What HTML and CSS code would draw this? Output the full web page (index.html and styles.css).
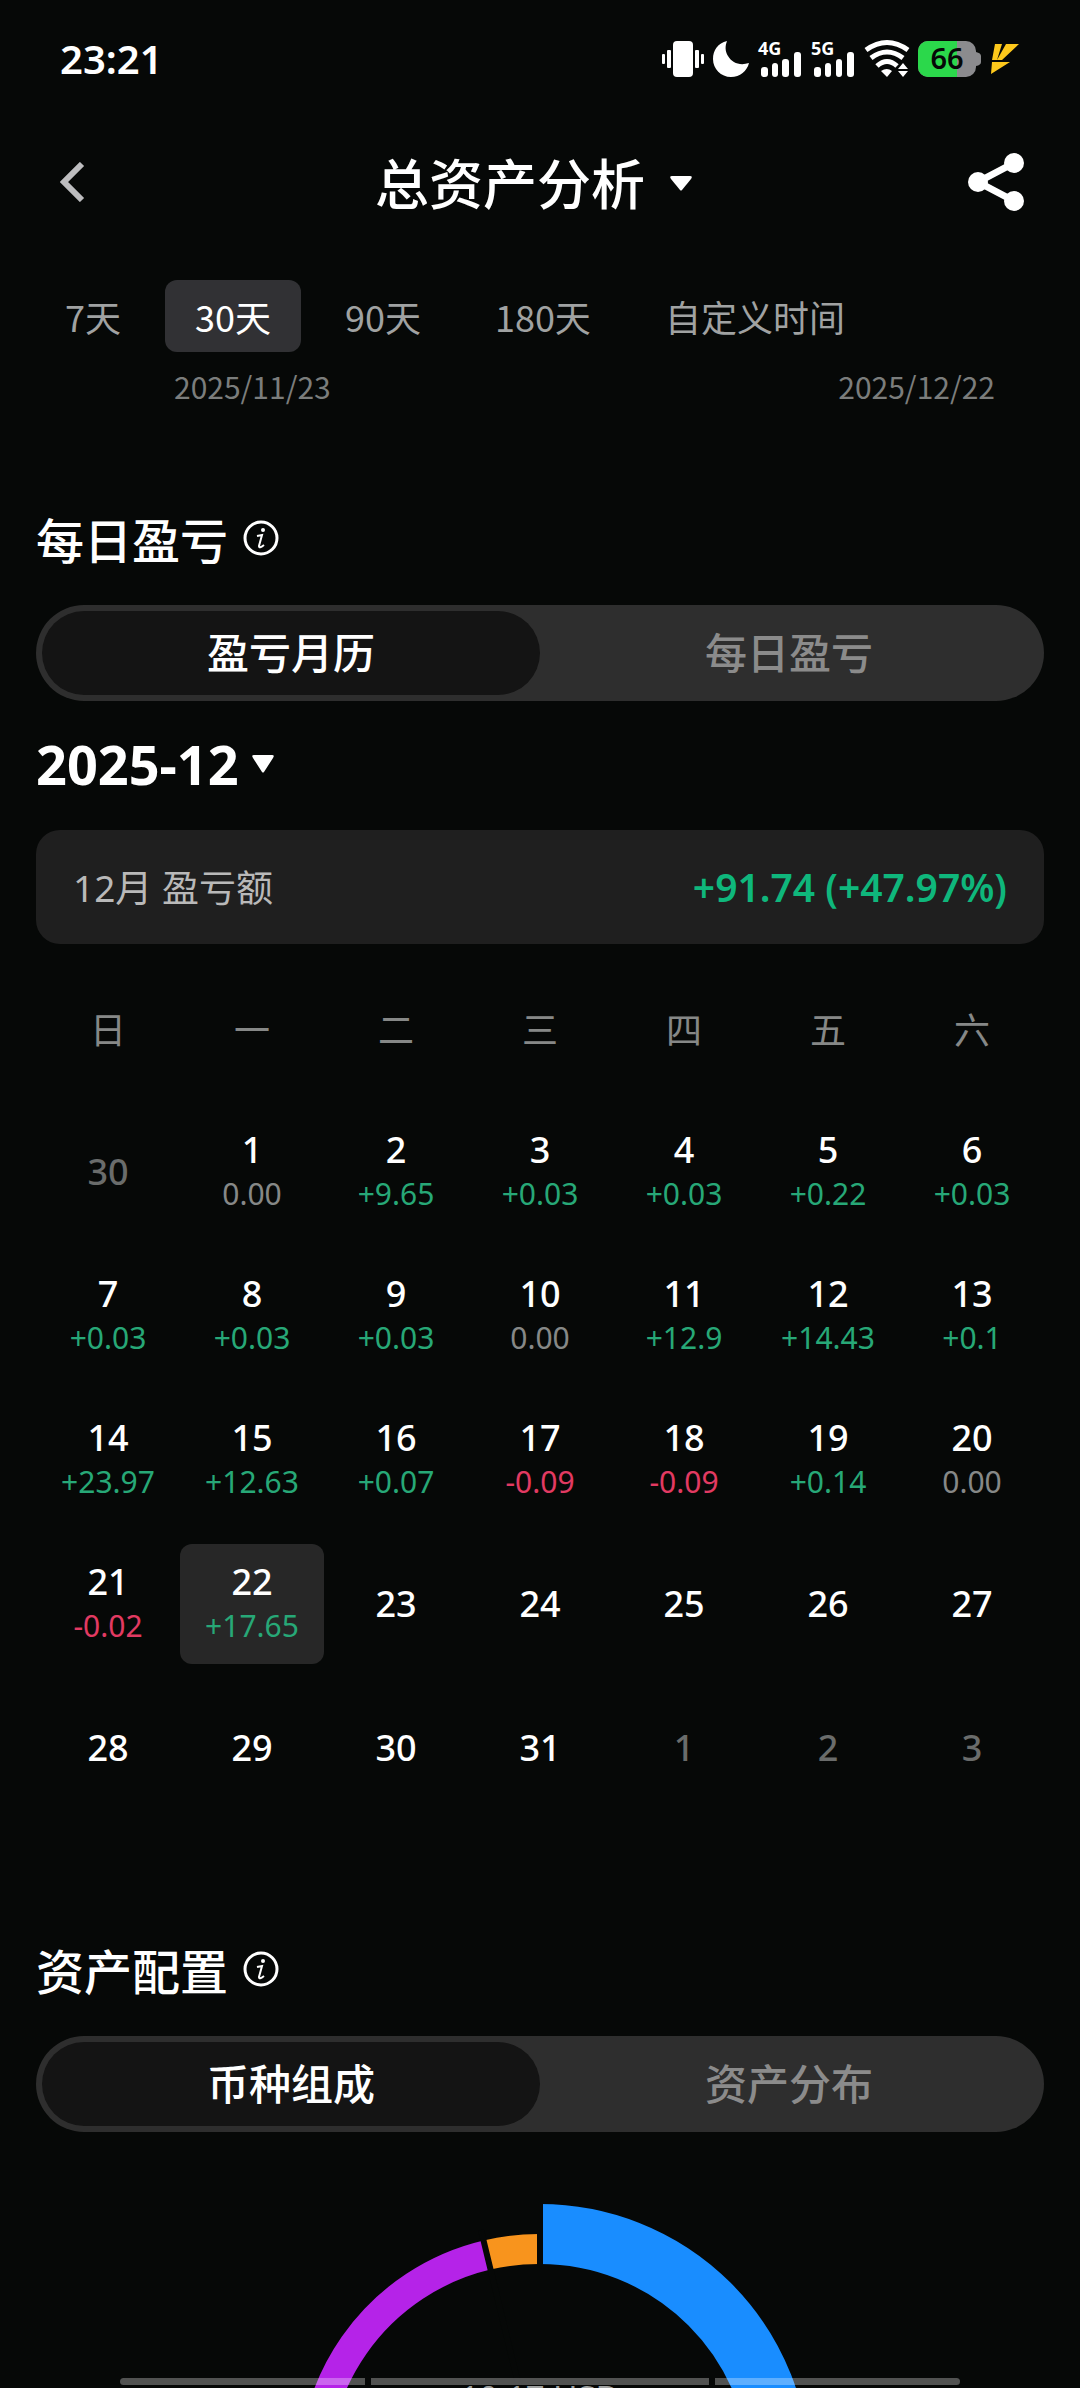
FILE: index.html
```html
<!DOCTYPE html>
<html lang="zh-CN">
<head>
<meta charset="utf-8">
<meta name="viewport" content="width=device-width, initial-scale=1">
<title>总资产分析</title>
<link rel="stylesheet" href="styles.css">
</head>
<body>
<div class="status-bar">
  <span class="clock">23:21</span>
  <svg class="status-icons" viewBox="0 0 360 40" width="360" height="40" aria-hidden="true">
    <g fill="#fff">
      <rect x="13" y="3" width="20" height="36" rx="4"/>
      <rect x="2" y="16" width="3" height="10" rx="1"/><rect x="7" y="12" width="4" height="18" rx="1"/>
      <rect x="35" y="12" width="4" height="18" rx="1"/><rect x="41" y="16" width="3" height="10" rx="1"/>
      <path d="M67 3C58 5 53 12 53 21C53 31 61 39 71 39C80 39 87 33 89 25C80 28 72 25 68 18C65 13 65 8 67 3Z"/>
      <rect x="101" y="29" width="7" height="10" rx="3"/><rect x="112" y="25" width="6" height="14" rx="3"/><rect x="122" y="21" width="7" height="18" rx="3"/><rect x="134" y="14" width="7" height="25" rx="3"/>
      <rect x="154" y="29" width="7" height="10" rx="3"/><rect x="165" y="25" width="6" height="14" rx="3"/><rect x="176" y="21" width="6" height="18" rx="3"/><rect x="187" y="14" width="7" height="25" rx="3"/>
      <text class="net-label" x="98" y="17">4G</text>
      <text class="net-label" x="151" y="17">5G</text>
      <path d="M221 33Q227 29 232 33L227 39Z"/>
      <path d="M243 25L248 31H238ZM238 33H248L243 39Z"/>
    </g>
    <g fill="none" stroke="#fff" stroke-width="5">
      <path d="M206 12Q227 -3 248 12"/><path d="M211 20Q227 8 243 20"/><path d="M217 28Q227 19 237 28"/>
    </g>
    <clipPath id="cell"><rect x="258" y="3" width="58" height="36" rx="10"/></clipPath>
    <path d="M316 14q5 1 5 4v6q0 3-5 4z" fill="#8b8b8e"/>
    <g clip-path="url(#cell)"><rect x="258" y="3" width="58" height="36" fill="#8b8b8e"/><rect x="258" y="3" width="39" height="36" fill="#2bd84b"/></g>
    <text class="battery-label" x="287" y="31" text-anchor="middle">66</text>
    <path d="M335 6H342L337 22H332ZM346 6H359L342 22H337ZM332 24H350L331 36Z" fill="#fdc81b"/>
  </svg>
</div>

<header class="top-bar">
  <button class="icon-button" aria-label="返回">
    <svg viewBox="0 0 26 40" width="26" height="40"><path d="M22 2L4 20L22 38" fill="none" stroke="#bdbdbf" stroke-width="6"/></svg>
  </button>
  <h1 class="page-title"><button class="title-button">总资产分析
    <svg class="caret" viewBox="0 0 24 18" width="24" height="18"><path d="M3 1H21Q24 1 22 4L13 15Q12 16 11 15L2 4Q0 1 3 1Z" fill="#fff"/></svg>
  </button></h1>
  <button class="icon-button share" aria-label="分享">
    <svg viewBox="0 0 56 58" width="56" height="58"><path d="M46 10L10 29L46 48" fill="none" stroke="#fff" stroke-width="7"/><g fill="#fff"><circle cx="46" cy="10" r="10"/><circle cx="10" cy="29" r="10"/><circle cx="46" cy="48" r="10"/></g></svg>
  </button>
</header>

<nav class="ranges" aria-label="时间范围">
  <button class="range">7天</button>
  <button class="range active">30天</button>
  <button class="range">90天</button>
  <button class="range">180天</button>
  <button class="range">自定义时间</button>
</nav>
<div class="dates"><time>2025/11/23</time><time>2025/12/22</time></div>

<main class="content">
  <section class="pnl">
    <h2 class="section-title">每日盈亏
      <svg class="info" viewBox="0 0 36 36" width="36" height="36"><circle cx="18" cy="18" r="16" fill="none" stroke="#fff" stroke-width="3"/><circle cx="20" cy="10" r="2" fill="#fff"/><path d="M14 16L19 15L16 26Q16 29 21 25" fill="none" stroke="#fff" stroke-width="2"/></svg>
    </h2>
    <div class="segmented">
      <button class="segment active">盈亏月历</button>
      <button class="segment">每日盈亏</button>
    </div>
    <button class="month">2025-12
      <svg class="caret" viewBox="0 0 24 18" width="24" height="18"><path d="M3 0H21Q24 0 22 3L13 17Q12 18 11 17L2 3Q0 0 3 0Z" fill="#fff"/></svg>
    </button>
    <div class="summary"><span>12月 盈亏额</span><strong>+91.74 (+47.97%)</strong></div>
    <table class="calendar">
      <thead><tr><th>日</th><th>一</th><th>二</th><th>三</th><th>四</th><th>五</th><th>六</th></tr></thead>
      <tbody>
        <tr>
          <td><div class="day other">30</div></td>
          <td><div class="day">1<span>0.00</span></div></td>
          <td><div class="day up">2<span>+9.65</span></div></td>
          <td><div class="day up">3<span>+0.03</span></div></td>
          <td><div class="day up">4<span>+0.03</span></div></td>
          <td><div class="day up">5<span>+0.22</span></div></td>
          <td><div class="day up">6<span>+0.03</span></div></td>
        </tr>
        <tr>
          <td><div class="day up">7<span>+0.03</span></div></td>
          <td><div class="day up">8<span>+0.03</span></div></td>
          <td><div class="day up">9<span>+0.03</span></div></td>
          <td><div class="day">10<span>0.00</span></div></td>
          <td><div class="day up">11<span>+12.9</span></div></td>
          <td><div class="day up">12<span>+14.43</span></div></td>
          <td><div class="day up">13<span>+0.1</span></div></td>
        </tr>
        <tr>
          <td><div class="day up">14<span>+23.97</span></div></td>
          <td><div class="day up">15<span>+12.63</span></div></td>
          <td><div class="day up">16<span>+0.07</span></div></td>
          <td><div class="day down">17<span>-0.09</span></div></td>
          <td><div class="day down">18<span>-0.09</span></div></td>
          <td><div class="day up">19<span>+0.14</span></div></td>
          <td><div class="day">20<span>0.00</span></div></td>
        </tr>
        <tr>
          <td><div class="day down">21<span>-0.02</span></div></td>
          <td><div class="day up selected">22<span>+17.65</span></div></td>
          <td><div class="day">23</div></td>
          <td><div class="day">24</div></td>
          <td><div class="day">25</div></td>
          <td><div class="day">26</div></td>
          <td><div class="day">27</div></td>
        </tr>
        <tr>
          <td><div class="day">28</div></td>
          <td><div class="day">29</div></td>
          <td><div class="day">30</div></td>
          <td><div class="day">31</div></td>
          <td><div class="day other">1</div></td>
          <td><div class="day other">2</div></td>
          <td><div class="day other">3</div></td>
        </tr>
      </tbody>
    </table>
  </section>

  <section class="allocation">
    <h2 class="section-title">资产配置
      <svg class="info" viewBox="0 0 36 36" width="36" height="36"><circle cx="18" cy="18" r="16" fill="none" stroke="#fff" stroke-width="3"/><circle cx="20" cy="10" r="2" fill="#fff"/><path d="M14 16L19 15L16 26Q16 29 21 25" fill="none" stroke="#fff" stroke-width="2"/></svg>
    </h2>
    <div class="segmented">
      <button class="segment active">币种组成</button>
      <button class="segment">资产分布</button>
    </div>
    <div class="chart">
      <svg class="donut" viewBox="-270 -270 540 540" width="540" height="540" aria-hidden="true">
        <path d="M0 -240A240 240 0 0 1 0 240" fill="none" stroke="#198dff" stroke-width="60"/>
        <path d="M0 225A225 225 0 0 1 -53 -219" fill="none" stroke="#b523e8" stroke-width="30"/>
        <path d="M-53 -219A225 225 0 0 1 0 -225" fill="none" stroke="#f8941d" stroke-width="30"/>
        <path d="M0 0V-270M0 0L-59 -244" stroke="#060807" stroke-width="6"/>
      </svg>
      <span class="total">10.17 USD</span>
    </div>
  </section>
</main>
<div class="home-indicator"><i></i><i></i><i></i></div>
</body>
</html>
```

FILE: styles.css
```css
* { box-sizing: border-box; }

body {
  margin: 0;
  height: 100vh;
  display: flex;
  flex-direction: column;
  overflow: hidden;
  background: #060807;
  color: #fff;
  font-family: "Noto Sans", "Noto Sans CJK SC", sans-serif;
  font-size: 36px;
}

button {
  border: 0;
  padding: 0;
  background: none;
  color: inherit;
  font: inherit;
}

h1, h2 { margin: 0; font-weight: 500; }
svg { display: block; flex: none; }

.status-bar {
  display: flex;
  justify-content: space-between;
  align-items: center;
  height: 116px;
  padding: 0 60px;
}
.status-icons { overflow: visible; }
.clock { font-size: 40px; font-weight: 600; }
.net-label { font-size: 18px; font-weight: 700; }
.battery-label { font-size: 29px; font-weight: 600; fill: #060807; }

.top-bar {
  display: grid;
  grid-template-columns: 1fr auto 1fr;
  align-items: center;
  height: 132px;
  padding: 0 56px 0 60px;
}
.icon-button { justify-self: start; }
.share { justify-self: end; }
.page-title { font-size: 54px; line-height: 80px; padding: 3px 16px 0 0; }
.title-button { display: flex; align-items: center; gap: 24px; }

.ranges {
  display: flex;
  gap: 14px;
  margin-top: 32px;
  padding: 0 35px;
  font-family: "Noto Sans CJK SC", sans-serif;
}
.range {
  height: 72px;
  padding: 0 30px;
  border-radius: 12px;
  line-height: 72px;
  color: #a0a2a2;
}
.range.active { background: #313134; color: #fff; }

.dates {
  display: flex;
  justify-content: space-between;
  padding: 12px 85px 0 174px;
  font: 30px/44px "Noto Sans CJK SC", sans-serif;
  color: #7b7d7c;
}

.content {
  flex: 1;
  min-height: 0;
  display: flex;
  flex-direction: column;
  padding: 94px 36px 0;
}

.section-title {
  display: flex;
  align-items: center;
  gap: 15px;
  height: 72px;
  font-size: 48px;
}

.segmented {
  display: grid;
  grid-template-columns: 1fr 1fr;
  margin-top: 31px;
  padding: 6px;
  border-radius: 48px;
  background: #2e2e2e;
}
.segment {
  height: 84px;
  border-radius: 42px;
  font-size: 42px;
  font-weight: 500;
  line-height: 84px;
  color: #8b8b8b;
}
.segment.active { background: #141414; color: #fff; }

.month {
  display: flex;
  align-items: center;
  gap: 12px;
  height: 72px;
  margin: 27px 0 30px;
  font-size: 54px;
  font-weight: 700;
}

.summary {
  display: flex;
  justify-content: space-between;
  align-items: center;
  height: 114px;
  padding: 0 37px 2px;
  border-radius: 24px;
  background: #1f1f1f;
  color: #b9b9b9;
  font-size: 37px;
}
.summary strong { font-size: 39px; font-weight: 600; color: #0fb77c; }

.calendar {
  width: 100%;
  margin-top: 12px;
  table-layout: fixed;
  border-collapse: collapse;
  text-align: center;
}
.calendar th {
  height: 144px;
  padding: 0;
  font-weight: 400;
  color: #868887;
}
.calendar td { height: 144px; padding: 0; }
.day {
  display: flex;
  flex-direction: column;
  justify-content: center;
  height: 120px;
  border-radius: 12px;
  font-weight: 500;
  line-height: 44px;
}
.day span { font-size: 30px; font-weight: 400; color: #868887; }
.day.up span { color: #27a877; }
.day.down span { color: #e23a62; }
.day.other { color: #6a6c6b; }
.day.selected { background: #272727; }

.allocation {
  flex: 1;
  min-height: 0;
  display: flex;
  flex-direction: column;
  margin-top: 113px;
}
.chart {
  flex: 1;
  min-height: 0;
  display: grid;
  justify-items: center;
  align-items: start;
  padding-top: 72px;
  overflow: hidden;
}
.donut, .total { grid-area: 1 / 1; }
.total { margin-top: 172px; font-size: 33px; line-height: 44px; color: #a0a2a2; }

.home-indicator {
  position: fixed;
  left: 120px;
  right: 120px;
  bottom: 3px;
  display: grid;
  grid-template-columns: 245fr 338fr 245fr;
  gap: 6px;
  height: 7px;
  border-radius: 4px;
  overflow: hidden;
}
.home-indicator i { background: rgba(255, 255, 255, 0.3); }
```
